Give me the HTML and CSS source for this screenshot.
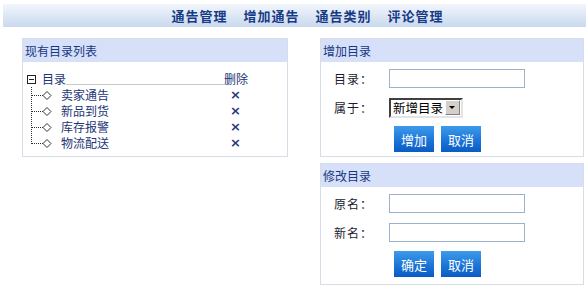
FILE: index.html
```html
<!DOCTYPE html>
<html>
<head>
    <title>目录管理</title>
    <link rel="stylesheet" href="styles.css">
</head>
<body>
    <div class="topbar">
        <a href="#">通告管理</a>
        <a href="#">增加通告</a>
        <a href="#">通告类别</a>
        <a href="#">评论管理</a>
    </div>

    <div class="main">
        <!-- 目录列表 -->
        <div class="panel list-panel">
            <div class="panel-title">现有目录列表</div>
            <div class="tree">
                <div class="tree-root">
                    <span class="toggle"></span>
                    <span class="root-name">目录</span>
                    <span class="root-line"></span>
                    <span class="del-head">删除</span>
                </div>
                <div class="tree-item">
                    <svg class="branch" width="28" height="16"><line x1="4.5" y1="0" x2="4.5" y2="16" class="dots"/><line x1="5" y1="8.5" x2="16" y2="8.5" class="dots"/><polygon points="20,4.5 24,8.5 20,12.5 16,8.5" class="node"/></svg>
                    <span class="item-name">卖家通告</span>
                    <span class="del">×</span>
                </div>
                <div class="tree-item">
                    <svg class="branch" width="28" height="16"><line x1="4.5" y1="0" x2="4.5" y2="16" class="dots"/><line x1="5" y1="8.5" x2="16" y2="8.5" class="dots"/><polygon points="20,4.5 24,8.5 20,12.5 16,8.5" class="node"/></svg>
                    <span class="item-name">新品到货</span>
                    <span class="del">×</span>
                </div>
                <div class="tree-item">
                    <svg class="branch" width="28" height="16"><line x1="4.5" y1="0" x2="4.5" y2="16" class="dots"/><line x1="5" y1="8.5" x2="16" y2="8.5" class="dots"/><polygon points="20,4.5 24,8.5 20,12.5 16,8.5" class="node"/></svg>
                    <span class="item-name">库存报警</span>
                    <span class="del">×</span>
                </div>
                <div class="tree-item">
                    <svg class="branch" width="28" height="16"><line x1="4.5" y1="0" x2="4.5" y2="9" class="dots"/><line x1="5" y1="8.5" x2="16" y2="8.5" class="dots"/><polygon points="20,4.5 24,8.5 20,12.5 16,8.5" class="node"/></svg>
                    <span class="item-name">物流配送</span>
                    <span class="del">×</span>
                </div>
            </div>
        </div>

        <div class="side">
            <!-- 增加目录 -->
            <div class="panel">
                <div class="panel-title">增加目录</div>
                <form class="panel-form">
                    <div class="form-row">
                        <label>目录：</label>
                        <input type="text" class="text-input">
                    </div>
                    <div class="form-row">
                        <label>属于：</label>
                        <div class="select-box">
                            <span class="select-text">新增目录</span>
                            <span class="select-arrow"></span>
                        </div>
                    </div>
                    <div class="btn-row">
                        <button type="button" class="btn">增加</button>
                        <button type="button" class="btn">取消</button>
                    </div>
                </form>
            </div>

            <!-- 修改目录 -->
            <div class="panel edit-panel">
                <div class="panel-title">修改目录</div>
                <form class="panel-form">
                    <div class="form-row">
                        <label>原名：</label>
                        <input type="text" class="text-input">
                    </div>
                    <div class="form-row">
                        <label>新名：</label>
                        <input type="text" class="text-input">
                    </div>
                    <div class="btn-row">
                        <button type="button" class="btn">确定</button>
                        <button type="button" class="btn">取消</button>
                    </div>
                </form>
            </div>
        </div>
    </div>
</body>
</html>
```

FILE: styles.css
```css
body {
    margin: 0;
    padding: 0;
    background: #fff;
    font-family: "Noto Sans CJK SC", "DejaVu Sans", sans-serif;
    font-size: 12px;
    color: #1d3576;
}

.topbar {
    margin: 4px 0 0 3px;
    height: 23px;
    background: linear-gradient(#f2f6fc, #dbe6f4 55%, #c9d9ee);
    display: flex;
    justify-content: center;
    align-items: center;
    gap: 16px;
    padding-left: 26px;
}

.topbar a {
    color: #183a86;
    font-size: 13px;
    font-weight: bold;
    letter-spacing: 1px;
    text-decoration: none;
    line-height: 16px;
}

.main {
    display: flex;
    gap: 32px;
    margin: 11px 0 0 22px;
}

.panel {
    border: 1px solid #d7dce6;
    box-sizing: border-box;
    height: 119px;
}

.list-panel {
    width: 266px;
}

.side {
    width: 264px;
    display: flex;
    flex-direction: column;
    gap: 6px;
}

.edit-panel {
    height: 122px;
}

.panel-title {
    background: #d6e0f8;
    height: 23px;
    line-height: 23px;
    padding-left: 2px;
    color: #163785;
}

/* tree */
.tree {
    padding: 9px 0 0 4px;
}

.tree-root {
    display: flex;
    align-items: center;
    height: 16px;
}

.toggle {
    width: 7px;
    height: 7px;
    border: 1px solid #222;
    position: relative;
    margin-right: 6px;
}

.toggle::after {
    content: "";
    position: absolute;
    left: 1px;
    top: 3px;
    width: 5px;
    height: 1px;
    background: #222;
}

.root-name {
    line-height: 16px;
}

.root-line {
    width: 158px;
    height: 1px;
    background: #c9c9c9;
    align-self: flex-end;
    margin-bottom: 2px;
}

.del-head {
    line-height: 16px;
}

.tree-item {
    display: flex;
    align-items: center;
    height: 16px;
}

.branch {
    display: block;
    margin-right: 6px;
}

.dots {
    stroke: #333;
    stroke-width: 1;
    stroke-dasharray: 1 1;
}

.node {
    fill: #fff;
    stroke: #333;
    stroke-width: 1;
}

.item-name {
    width: 169px;
    line-height: 16px;
}

.del {
    font-family: "DejaVu Sans", sans-serif;
    font-weight: bold;
    font-size: 13px;
    color: #27367a;
    line-height: 16px;
}

/* forms */
.panel-form {
    margin: 0;
    padding: 7px 0 0 13px;
}

.form-row {
    display: flex;
    align-items: center;
    height: 19px;
    margin-bottom: 10px;
}

.form-row label {
    width: 55px;
    color: #1b1b2e;
    font-size: 12px;
    letter-spacing: 1px;
}

.text-input {
    width: 136px;
    height: 19px;
    box-sizing: border-box;
    border: 1px solid #9bb2cd;
    padding: 0 2px;
    margin: 0;
    font-size: 12px;
}

.select-box {
    display: flex;
    align-items: center;
    width: 74px;
    height: 20px;
    box-sizing: border-box;
    border: 2px solid;
    border-color: #404040 #e4e4e4 #e4e4e4 #404040;
    background: #fff;
    padding: 0 1px 0 2px;
}

.select-text {
    color: #000;
    font-size: 12.5px;
    line-height: 16px;
    flex: 1;
}

.select-arrow {
    width: 15px;
    height: 15px;
    box-sizing: border-box;
    background: #d4d0c8;
    border: 1px solid;
    border-color: #fff #808080 #808080 #fff;
    position: relative;
}

.select-arrow::after {
    content: "";
    position: absolute;
    left: 3px;
    top: 5px;
    border-left: 3.5px solid transparent;
    border-right: 3.5px solid transparent;
    border-top: 3.5px solid #000;
}

.btn-row {
    display: flex;
    gap: 7px;
    padding-left: 60px;
    margin-top: -1px;
}

.btn {
    width: 40px;
    height: 26px;
    border: none;
    padding: 0;
    background: linear-gradient(#3d9bea, #1a72d6 60%, #0a5cc2);
    color: #fff;
    font-family: "Noto Sans CJK SC", sans-serif;
    font-size: 13px;
    cursor: pointer;
}
```
